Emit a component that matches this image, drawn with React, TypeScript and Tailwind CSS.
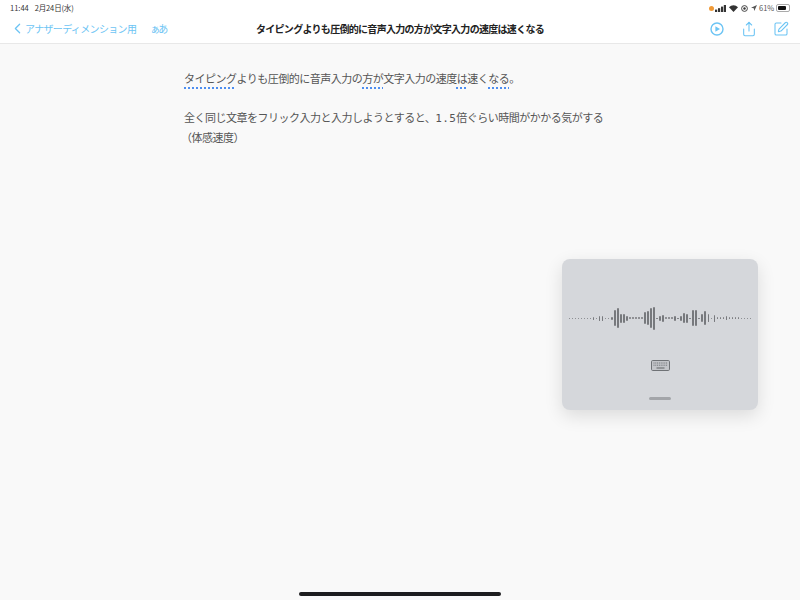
import { ChevronLeft, Share, SquarePen } from "lucide-react";

const font = { fontFamily: '"Noto Sans CJK JP", "Noto Sans", sans-serif' };

// bar heights of the voice wave form, left to right
const wave = [
  1, 1, 1, 1, 1, 1, 1, 1, 3, 1, 5, 5, 1, 1, 3, 16, 20, 9, 9, 5, 2, 2, 2, 2, 2, 12, 14, 20, 23, 1, 5, 7, 2, 2, 2, 5, 1,
  5, 10, 9, 1, 16, 16, 1, 8, 14, 8, 1, 7, 2, 2, 2, 4, 2, 2, 2, 2, 1, 1, 1, 1,
];

function Squiggle({ children }: { children: string }) {
  return (
    <span className="underline decoration-dotted decoration-[#4d8ef0] decoration-[1.5px] underline-offset-[4px]">
      {children}
    </span>
  );
}

function StatusIcons() {
  return (
    <div className="flex items-center text-[#333]">
      <span className="h-[5px] w-[5px] rounded-full bg-[#f09a37]" />
      <svg width="11" height="7" viewBox="0 0 11 7" fill="currentColor" className="ml-[1px]">
        <rect x="0" y="4.6" width="2.2" height="2.4" />
        <rect x="3" y="3.2" width="2.2" height="3.8" />
        <rect x="6" y="1.6" width="2.2" height="5.4" />
        <rect x="8.8" y="0" width="2.2" height="7" />
      </svg>
      <svg width="9" height="7" viewBox="0 0 9 7" fill="currentColor" className="ml-[3px]">
        <path d="M4.5 7 0 2.2a6.4 6.4 0 0 1 9 0z" />
      </svg>
      <svg width="7" height="7" viewBox="0 0 7 7" fill="none" stroke="currentColor" className="ml-[3px]">
        <circle cx="3.5" cy="3.5" r="2.9" strokeWidth=".9" />
        <circle cx="3.5" cy="3.5" r="1.2" fill="currentColor" stroke="none" />
      </svg>
      <svg width="6" height="6" viewBox="0 0 7 7" fill="#555" className="ml-[3px]">
        <path d="M7 0 0 3.2l3.2.6.6 3.2z" />
      </svg>
      <span className="ml-[2px] w-[14px] text-[7.5px] leading-none text-[#555]">61%</span>
      <div className="ml-[3px] flex h-[8px] w-[14px] items-center rounded-[2px] border border-[#aaa] p-[1px]">
        <div className="h-full w-[8px] rounded-[1px] bg-[#111]" />
      </div>
    </div>
  );
}

function PlayGlyph() {
  return (
    <svg width="16" height="16" viewBox="0 0 16 16" fill="none" stroke="currentColor" strokeWidth="1.4">
      <circle cx="8" cy="8" r="6" />
      <path d="M6.4 5.2v5.6L11 8z" fill="currentColor" stroke="none" />
    </svg>
  );
}

function KeyboardGlyph() {
  return (
    <svg width="19" height="11" viewBox="0 0 19 11" fill="none">
      <rect x=".5" y=".5" width="18" height="10" rx="1.2" fill="#c3c5c9" stroke="#6f7276" />
      <path d="M2.5 3h14M2.5 5.2h14" stroke="#6f7276" strokeWidth="1" strokeDasharray="1 .8" />
      <path d="M5.5 8h8" stroke="#6f7276" strokeWidth="1.2" />
    </svg>
  );
}

function DictationPanel() {
  return (
    <div className="absolute left-[562px] top-[259px] flex h-[151px] w-[196px] flex-col items-center rounded-[8px] bg-[#d5d7db] shadow-[0_6px_18px_rgba(0,0,0,0.12)]">
      <div className="mt-[47px] flex h-[24px] items-center gap-[1.53px]">
        {wave.map((h, i) => (
          <div key={i} className="w-[1.5px] rounded-full bg-[#77797d]" style={{ height: h }} />
        ))}
      </div>
      <div className="mt-[30px] flex">
        <KeyboardGlyph />
      </div>
      <div className="mt-[26px] h-[3px] w-[22px] rounded-full bg-[#a3a5a9]" />
    </div>
  );
}

export default function App() {
  return (
    <div className="relative flex h-[600px] w-[800px] flex-col overflow-hidden bg-[#f9f9f9]" style={font}>
      <header className="h-[44px] border-b border-[#e8e8e8] bg-white">
        <div className="flex h-[14px] items-center justify-between pl-[10px] pr-[10px] pt-[2px] text-[7.5px] text-[#333]">
          <div className="flex gap-[6px]">
            <span>11:44</span>
            <span className="tracking-[-0.15px]">2月24日(水)</span>
          </div>
          <StatusIcons />
        </div>
        <div className="relative flex h-[29px] items-center pl-[9px] pr-[11px] text-[#6cc4f4]">
          <ChevronLeft size={17} strokeWidth={1.8} />
          <span className="ml-[-1px] text-[10px] tracking-[-0.65px]">アナザーディメンション用</span>
          <span className="ml-[14px] text-[10px] tracking-[-2px]">ぁあ</span>
          <h1 className="absolute inset-x-0 text-center text-[10px] font-bold tracking-[-0.7px] text-[#222]">
            タイピングよりも圧倒的に音声入力の方が文字入力の速度は速くなる
          </h1>
          <div className="ml-auto flex items-center gap-[16px]">
            <PlayGlyph />
            <Share size={16} strokeWidth={1.6} />
            <SquarePen size={16} strokeWidth={1.6} />
          </div>
        </div>
      </header>

      <main className="flex-1 pl-[184px] pt-[24px] text-[11px] leading-[20px] tracking-[-0.5px] text-[#555]">
        <p>
          <Squiggle>タイピング</Squiggle>よりも圧倒的に音声入力の<Squiggle>方が</Squiggle>文字入力の速度
          <Squiggle>は</Squiggle>速く<Squiggle>なる</Squiggle>。
        </p>
        <p className="mt-[19px]">
          全く同じ文章をフリック入力と入力しようとすると、
          <span className="font-['DejaVu_Sans_Mono'] leading-none tracking-[0.38px]">1.5</span>
          倍ぐらい時間がかかる気がする
        </p>
        <p className="-ml-[3px]">（体感速度）</p>
      </main>

      <div className="flex justify-center pb-[4px]">
        <div className="h-[4px] w-[202px] rounded-full bg-[#1c1c1e]" />
      </div>

      <DictationPanel />
    </div>
  );
}
